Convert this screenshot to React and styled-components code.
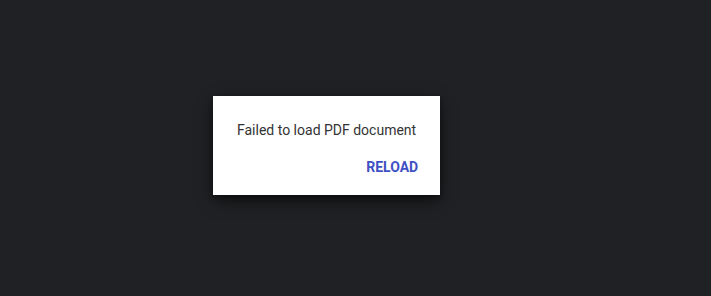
import React from "react";
import styled, { createGlobalStyle } from "styled-components";

const Global = createGlobalStyle`
  html, body { margin: 0; padding: 0; background: #202124; }
  body { font-family: Roboto, "Noto Sans", sans-serif; }
`;

const Viewer = styled.div`
  width: 711px;
  height: 296px;
  box-sizing: border-box;
  background: #202124;
  display: flex;
  align-items: flex-start;
  padding: 96px 0 0 213px;
`;

const Dialog = styled.div`
  background: #ffffff;
  display: flex;
  flex-direction: column;
  box-shadow: 0 6px 14px rgba(0, 0, 0, 0.55), 0 2px 4px rgba(0, 0, 0, 0.3);
`;

const Message = styled.div`
  padding: 24px 24px 0;
  font-size: 14px;
  line-height: 20px;
  color: #333333;
  white-space: nowrap;
`;

const Actions = styled.div`
  display: flex;
  justify-content: flex-end;
  padding: 9px 14px 10px;
`;

const Button = styled.button`
  border: none;
  background: transparent;
  padding: 8px;
  font-family: Roboto, "Noto Sans", sans-serif;
  font-size: 14px;
  line-height: 20px;
  font-weight: 700;
  color: #3f51c4;
  text-transform: uppercase;
  cursor: pointer;
`;

export default function App() {
  return (
    <>
      <Global />
      <Viewer>
        <Dialog>
          <Message>Failed to load PDF document</Message>
          <Actions>
            <Button>Reload</Button>
          </Actions>
        </Dialog>
      </Viewer>
    </>
  );
}
